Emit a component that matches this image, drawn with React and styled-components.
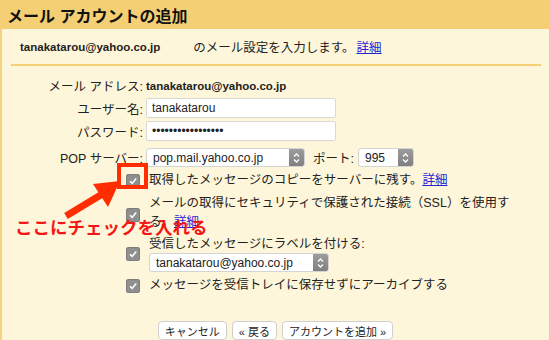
import React from "react";
import styled, { createGlobalStyle } from "styled-components";

const GlobalStyle = createGlobalStyle`
  html, body {
    margin: 0;
    padding: 0;
    background: #fef6da;
  }
  body {
    font-family: "Liberation Sans", "Noto Sans CJK JP", sans-serif;
    color: #222;
  }
`;

const Page = styled.div`
  position: relative;
  width: 550px;
  height: 340px;
  overflow: hidden;
  background: #fef6da;
`;

const Header = styled.div`
  height: 29px;
  display: flex;
  align-items: center;
  padding-left: 7px;
  background: #f4cf74;
  font-size: 16px;
  font-weight: bold;
  color: #111;
`;

const Body = styled.div`
  height: 311px;
  border-left: 2px solid #f5d27d;
  border-right: 1px solid #eccf86;
  box-sizing: border-box;
`;

const Intro = styled.div`
  height: 35px;
  display: flex;
  align-items: center;
  padding-left: 18px;
  font-size: 12.5px;
`;

const Email = styled.span`
  font-weight: bold;
  font-size: 11.5px;
  margin-right: ${(p) => p.$after || 0}px;
`;

const Link = styled.a`
  color: #2323d6;
  text-decoration: underline;
  margin-left: ${(p) => p.$left || 0}px;
  cursor: pointer;
`;

const Divider = styled.div`
  height: 2px;
  margin: 0 8px 0 9px;
  background: #f4cf74;
`;

const Form = styled.div`
  padding: 10px 0 0 10px;
`;

const Row = styled.div`
  display: grid;
  grid-template-columns: 131px 1fr;
  column-gap: 3px;
  align-items: center;
  margin-top: ${(p) => p.$gap || 0}px;
  min-height: ${(p) => p.$h || 0}px;
  font-size: 12.5px;
`;

const Label = styled.div`
  text-align: right;
  white-space: nowrap;
`;

const Value = styled.div`
  display: flex;
  align-items: center;
  font-weight: ${(p) => (p.$bold ? "bold" : "normal")};
  font-size: ${(p) => (p.$bold ? "11.5px" : "inherit")};
`;

const TextInput = styled.input`
  box-sizing: border-box;
  width: 190px;
  height: 20px;
  padding: 0 5px;
  border: 1px solid #d8d8d8;
  border-radius: 2px;
  background: #fff;
  font-family: inherit;
  font-size: 12px;
  color: #222;
  outline: none;
`;

const SelectBox = styled.div`
  box-sizing: border-box;
  display: inline-flex;
  align-items: center;
  justify-content: space-between;
  width: ${(p) => p.$w}px;
  height: 19px;
  border: 1px solid #d4d4d4;
  border-radius: 3px;
  background: #fff;
  font-size: 12px;
  overflow: hidden;
`;

const SelectText = styled.span`
  padding-left: 6px;
  white-space: nowrap;
`;

const Stepper = styled.span`
  width: 15px;
  height: 100%;
  display: flex;
  align-items: center;
  justify-content: center;
  background: linear-gradient(#9d9d9d, #7f7f7f);
`;

const PortLabel = styled.span`
  margin: 0 4px 0 8px;
`;

const CheckCell = styled.div`
  justify-self: end;
  margin-right: 3px;
  margin-top: ${(p) => p.$shift || 0}px;
`;

const CheckBox = styled.span`
  display: flex;
  align-items: center;
  justify-content: center;
  width: 14px;
  height: 14px;
  border-radius: 3px;
  background: #8f8f8f;
  box-shadow: inset 0 0 0 1px #7d7d7d;
`;

const CheckText = styled.div`
  padding-left: 3px;
  line-height: 19px;
  max-width: 366px;
`;

const Stack = styled.div`
  padding-left: 3px;
  display: flex;
  flex-direction: column;
  line-height: 18px;
`;

const Buttons = styled.div`
  display: flex;
  justify-content: center;
  gap: 5px;
  margin-top: 26px;
`;

const Button = styled.button`
  height: 19px;
  padding: 0 6px;
  border: 1px solid #cfcfcf;
  border-radius: 4px;
  background: #fff;
  font-family: inherit;
  font-size: 11px;
  color: #222;
`;

const RedBox = styled.div`
  position: absolute;
  left: 117px;
  top: 163px;
  width: 31px;
  height: 26px;
  box-sizing: border-box;
  border: 4px solid #ff2d00;
`;

const ArrowSvg = styled.svg`
  position: absolute;
  left: 0;
  top: 0;
  pointer-events: none;
`;

const Callout = styled.div`
  position: absolute;
  left: 15px;
  top: 220px;
  font-size: 17.5px;
  line-height: 1;
  font-weight: bold;
  color: #f41616;
  white-space: nowrap;
`;

const StepIcon = () => (
  <svg width="9" height="12" viewBox="0 0 9 12">
    <path d="M2 4.5 L4.5 2 L7 4.5 M2 7.5 L4.5 10 L7 7.5" fill="none" stroke="#fff" strokeWidth="1.3" />
  </svg>
);

const Select = ({ w, children }) => (
  <SelectBox $w={w}>
    <SelectText>{children}</SelectText>
    <Stepper>
      <StepIcon />
    </Stepper>
  </SelectBox>
);

const Check = ({ shift }) => (
  <CheckCell $shift={shift}>
    <CheckBox>
      <svg width="10" height="10" viewBox="0 0 10 10">
        <path d="M2 5.2 L4.2 7.4 L8.2 2.6" fill="none" stroke="#fff" strokeWidth="1.6" />
      </svg>
    </CheckBox>
  </CheckCell>
);

export default function App() {
  return (
    <Page>
      <GlobalStyle />
      <Header>メール アカウントの追加</Header>
      <Body>
        <Intro>
          <Email $after={33}>tanakatarou@yahoo.co.jp</Email>
          のメール設定を入力します。
          <Link $left={2}>詳細</Link>
        </Intro>
        <Divider />
        <Form>
          <Row $h={18}>
            <Label>メール アドレス:</Label>
            <Value $bold>tanakatarou@yahoo.co.jp</Value>
          </Row>
          <Row $gap={3} $h={20}>
            <Label>ユーザー名:</Label>
            <Value>
              <TextInput readOnly defaultValue="tanakatarou" />
            </Value>
          </Row>
          <Row $gap={3} $h={20}>
            <Label>パスワード:</Label>
            <Value>
              <TextInput type="password" readOnly defaultValue="tanakatarou123456" />
            </Value>
          </Row>
          <Row $gap={7} $h={19}>
            <Label>POP サーバー:</Label>
            <Value>
              <Select w={159}>pop.mail.yahoo.co.jp</Select>
              <PortLabel>ポート:</PortLabel>
              <Select w={56}>995</Select>
            </Value>
          </Row>
          <Row $gap={4} $h={16}>
            <Check />
            <CheckText>
              取得したメッセージのコピーをサーバーに残す。<Link>詳細</Link>
            </CheckText>
          </Row>
          <Row $gap={4} $h={38}>
            <Check shift={3} />
            <CheckText>
              メールの取得にセキュリティで保護された接続（SSL）を使用する。<Link>詳細</Link>
            </CheckText>
          </Row>
          <Row $gap={3} $h={37}>
            <Check />
            <Stack>
              <span>受信したメッセージにラベルを付ける:</span>
              <Select w={180}>tanakatarou@yahoo.co.jp</Select>
            </Stack>
          </Row>
          <Row $gap={4} $h={16}>
            <Check />
            <CheckText>メッセージを受信トレイに保存せずにアーカイブする</CheckText>
          </Row>
        </Form>
        <Buttons>
          <Button>キャンセル</Button>
          <Button>« 戻る</Button>
          <Button>アカウントを追加 »</Button>
        </Buttons>
      </Body>

      <RedBox />
      <ArrowSvg width="550" height="340" viewBox="0 0 550 340">
        <line x1="66" y1="216" x2="104" y2="193" stroke="#ff2d00" strokeWidth="7" />
        <polygon points="120,181 93,184 108,207" fill="#ff2d00" />
      </ArrowSvg>
      <Callout>ここにチェックを入れる</Callout>
    </Page>
  );
}
